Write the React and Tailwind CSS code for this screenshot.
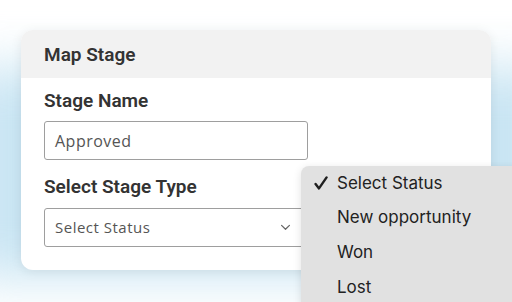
import React from 'react';

const options = ['Select Status', 'New opportunity', 'Won', 'Lost'];

const App = () => {
  return (
    <div className="relative w-[512px] h-[302px] overflow-hidden bg-white">
      {/* soft blue glow behind the card */}
      <div className="absolute left-[-40px] top-[68px] w-[600px] h-[210px] bg-[#c9e5f3] blur-[26px]" />

      <div className="relative pt-[30px] pl-[21px]">
        <div className="w-[470px] rounded-[12px] bg-white shadow-[0_2px_12px_rgba(0,0,0,0.08)] overflow-hidden">
          <div className="h-[48px] bg-[#f2f2f2] pl-[23px] flex items-center">
            <h2 className="text-[19px] font-semibold text-[#333] font-['Roboto',sans-serif] pt-[2px]">Map Stage</h2>
          </div>

          <div className="pl-[23px] pt-[11px] pb-[23px]">
            <label className="block text-[19px] font-semibold text-[#333] font-['Roboto',sans-serif] leading-[24px]">
              Stage Name
            </label>
            <div className="mt-[8px] w-[264px] h-[39px] border border-[#9e9e9e] rounded-[3px] flex items-center px-[10px]">
              <span className="text-[16px] text-[#555] font-['Open_Sans',sans-serif] tracking-[0.5px]">Approved</span>
            </div>

            <label className="mt-[15px] block text-[19px] font-semibold text-[#333] font-['Roboto',sans-serif] leading-[24px]">
              Select Stage Type
            </label>
            <div className="mt-[9px] w-[264px] h-[39px] border border-[#9e9e9e] rounded-[3px] flex items-center justify-between pl-[10px] pr-[16px]">
              <span className="text-[15px] text-[#555] font-['Open_Sans',sans-serif] tracking-[0.5px]">Select Status</span>
              <svg width="11" height="7" viewBox="0 0 12 8" fill="none" stroke="#666" strokeWidth="1.4" strokeLinecap="round" strokeLinejoin="round">
                <path d="M1.5 1.5 6 6l4.5-4.5" />
              </svg>
            </div>
          </div>
        </div>
      </div>

      {/* native select menu */}
      <div className="absolute left-[301px] top-[166px] w-[230px] h-[150px] bg-[#e1e1e1] rounded-tl-[8px] shadow-[0_2px_8px_rgba(0,0,0,0.12)] font-['Inter',sans-serif] text-[17px] text-[#222]">
        {options.map((opt, i) => (
          <div key={opt} className="h-[34.7px] flex items-center">
            <span className="w-[36px] pl-[13px] flex items-center">
              {i === 0 && (
                <svg width="14" height="14" viewBox="0 0 14 14" fill="none" stroke="#1f1f1f" strokeWidth="2.4" strokeLinecap="round" strokeLinejoin="round">
                  <path d="M1.6 8 5 12.4 12.6 1.4" />
                </svg>
              )}
            </span>
            <span>{opt}</span>
          </div>
        ))}
      </div>
    </div>
  );
};

export default App;
